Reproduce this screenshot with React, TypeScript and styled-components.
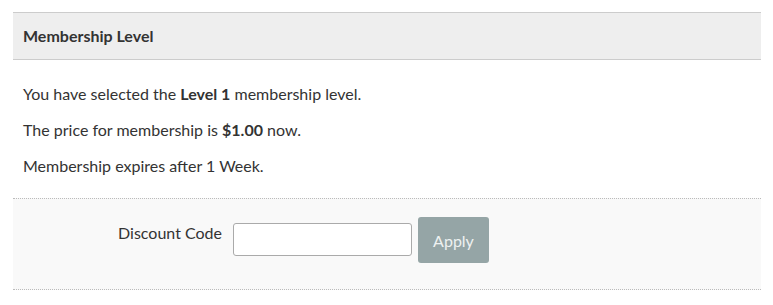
import React from 'react'
import styled, { createGlobalStyle } from 'styled-components'

const GlobalStyle = createGlobalStyle`
  body {
    margin: 0;
    background: #fff;
    font-family: Lato, 'Open Sans', sans-serif;
    color: #333;
  }
`

export default function App() {
  return (
    <>
      <GlobalStyle />
      <Div_Page>
        <Div_Panel>
          <H3_Heading>Membership Level</H3_Heading>
          <Div_Body>
            <P_Line>
              You have selected the <strong>Level 1</strong> membership level.
            </P_Line>
            <P_Line>
              The price for membership is <strong>$1.00</strong> now.
            </P_Line>
            <P_Line>Membership expires after 1 Week.</P_Line>
          </Div_Body>
          <Div_Discount>
            <Label_Discount htmlFor='discount_code'>Discount Code</Label_Discount>
            <Input_Code id='discount_code' type='text' />
            <Button_Apply type='button'>Apply</Button_Apply>
          </Div_Discount>
        </Div_Panel>
      </Div_Page>
    </>
  )
}

const Div_Page = styled.div`
  padding: 12px 12px 0 13px;
`

const Div_Panel = styled.div`
  width: 748px;
`

const H3_Heading = styled.h3`
  margin: 0;
  padding: 12px 10px 12px 10px;
  line-height: 22px;
  font-size: 16px;
  font-weight: 700;
  color: #333;
  background: #eee;
  border-top: 1px solid #ccc;
  border-bottom: 1px solid #ccc;
`

const Div_Body = styled.div`
  display: flex;
  flex-direction: column;
  gap: 15px;
  padding: 23px 10px 22px;
`

const P_Line = styled.p`
  margin: 0;
  font-size: 16px;
  line-height: 21px;
  & strong {
    font-weight: 700;
  }
`

const Div_Discount = styled.div`
  display: flex;
  align-items: flex-start;
  padding: 18px 0 26px;
  background: #f9f9f9;
  border-top: 1px dotted #bbb;
  border-bottom: 1px dotted #bbb;
`

const Label_Discount = styled.label`
  width: 220px;
  margin-top: 5px;
  padding-right: 11px;
  box-sizing: border-box;
  text-align: right;
  font-size: 16px;
  line-height: 21px;
  color: #333;
`

const Input_Code = styled.input`
  box-sizing: border-box;
  width: 179px;
  height: 33px;
  margin-top: 6px;
  padding: 4px 6px;
  border: 1px solid #aaa;
  border-radius: 3px;
  background: #fff;
  font-family: inherit;
  font-size: 16px;
`

const Button_Apply = styled.button`
  box-sizing: border-box;
  width: 71px;
  height: 46px;
  margin-left: 6px;
  border: none;
  border-radius: 3px;
  background: #95a5a6;
  color: #eef1f1;
  font-family: inherit;
  font-size: 16px;
`
